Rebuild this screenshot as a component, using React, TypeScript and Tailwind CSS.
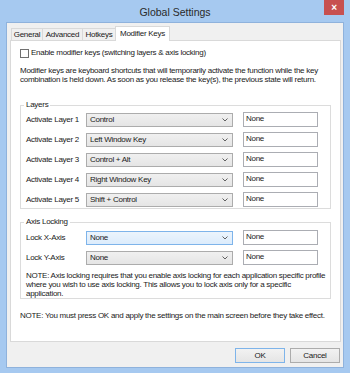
import React from 'react';

const FONT = { fontFamily: '"Liberation Sans", Arial, sans-serif' };

const LAYERS = [
  { label: 'Activate Layer 1', value: 'Control' },
  { label: 'Activate Layer 2', value: 'Left Window Key' },
  { label: 'Activate Layer 3', value: 'Control + Alt' },
  { label: 'Activate Layer 4', value: 'Right Window Key' },
  { label: 'Activate Layer 5', value: 'Shift + Control' },
];

const TABS = [
  { label: 'General', w: 'w-[32px]' },
  { label: 'Advanced', w: 'w-[41px]' },
  { label: 'Hotkeys', w: 'w-[34px]' },
];

function Chevron() {
  return (
    <svg width="6" height="4" viewBox="0 0 6 4" className="mr-[4px]">
      <path d="M0.5 0.5 L3 3 L5.5 0.5" fill="none" stroke="#606060" strokeWidth="1" />
    </svg>
  );
}

function Combo({ value, focused }: { value: string; focused?: boolean }) {
  return (
    <div
      className={`w-[147px] h-[14px] flex items-center justify-between border pl-[3px] ${
        focused
          ? 'border-[#7eb4ea] bg-gradient-to-b from-[#ecf4fc] to-[#dcecfc]'
          : 'border-[#acacac] bg-gradient-to-b from-[#f0f0f0] to-[#e5e5e5]'
      }`}
    >
      <span className="leading-none">{value}</span>
      <Chevron />
    </div>
  );
}

function TextBox() {
  return (
    <div className="w-[75px] h-[15px] border border-[#abadb3] bg-white pl-[2px] pt-[2px] leading-none">
      None
    </div>
  );
}

function Row({ label, value, focused }: { label: string; value: string; focused?: boolean }) {
  return (
    <div className="flex items-center h-[15px]">
      <span className="w-[65px] pl-[5px] leading-none">{label}</span>
      <Combo value={value} focused={focused} />
      <div className="w-[10px]" />
      <TextBox />
    </div>
  );
}

export default function App() {
  return (
    <div
      className="w-[350px] h-[373px] bg-[#a6c9f0] flex flex-col text-[8px] tracking-[-0.27px] text-[#1a1a1a] whitespace-nowrap"
      style={FONT}
    >
      {/* title bar */}
      <div className="h-[22px] flex items-start relative">
        <div className="flex-1 text-center text-[10.5px] tracking-normal text-[#2a2a2a] pt-[5px]">Global Settings</div>
        <div className="absolute right-[6px] top-0 w-[20px] h-[15px] bg-[#c75050] flex items-center justify-center text-white text-[10px] font-bold leading-none">
          ×
        </div>
      </div>

      {/* client */}
      <div className="mx-[6px] h-[346px] bg-[#f0f0f0] border border-[#8fb2dc] flex flex-col">
        {/* tabs */}
        <div className="flex items-end h-[17px] pl-[4px] pt-[2px]">
          {TABS.map(t => (
            <div
              key={t.label}
              className={`${t.w} h-[12px] border border-b-0 border-[#d9d9d9] bg-[#f0f0f0] -mr-px flex items-center justify-center leading-none`}
            >
              {t.label}
            </div>
          ))}
          <div className="w-[55px] h-[15px] border border-b-0 border-[#d9d9d9] bg-white -mb-px relative z-10 flex items-center justify-center leading-none">
            Modifier Keys
          </div>
        </div>

        {/* panel */}
        <div className="ml-[3px] w-[331px] h-[302px] bg-white border border-[#d9d9d9] flex flex-col px-[9px]">
          <div className="flex items-center mt-[7px] h-[10px]">
            <div className="w-[9px] h-[9px] border border-[#707070] bg-white" />
            <span className="ml-[2px] leading-none">Enable modifier keys (switching layers &amp; axis locking)</span>
          </div>
          <p className="mt-[8px] leading-[9px]">
            Modifier keys are keyboard shortcuts that will temporarily activate the function while the key
            <br />
            combination is held down. As soon as you release the key(s), the previous state will return.
          </p>

          {/* Layers */}
          <fieldset className="mt-[17px] w-[311px] h-[108px] border border-[#dcdcdc] px-0 flex flex-col">
            <legend className="ml-[3px] px-[2px] leading-none">Layers</legend>
            <div className="flex flex-col gap-[5px] mt-[3px]">
              {LAYERS.map(l => (
                <Row key={l.label} label={l.label} value={l.value} />
              ))}
            </div>
          </fieldset>

          {/* Axis locking */}
          <fieldset className="mt-[9px] w-[311px] h-[81px] border border-[#dcdcdc] px-0 flex flex-col">
            <legend className="ml-[3px] px-[2px] leading-none">Axis Locking</legend>
            <div className="flex flex-col gap-[5px] mt-[4px]">
              <Row label="Lock X-Axis" value="None" focused />
              <Row label="Lock Y-Axis" value="None" />
            </div>
            <p className="mt-[6px] pl-[5px] leading-[9px]">
              NOTE: Axis locking requires that you enable axis locking for each application specific profile
              <br />
              where you wish to use axis locking. This allows you to lock axis only for a specific
              <br />
              application.
            </p>
          </fieldset>

          <p className="mt-[13px] leading-none">
            NOTE: You must press OK and apply the settings on the main screen before they take effect.
          </p>
        </div>

        {/* buttons */}
        <div className="flex justify-end gap-[5px] mt-[6px] pr-[3px]">
          <div className="w-[50px] h-[15px] border border-[#7eb4ea] bg-gradient-to-b from-[#f2f2f2] to-[#e5e5e5] flex items-center justify-center leading-none">
            OK
          </div>
          <div className="w-[50px] h-[15px] border border-[#acacac] bg-gradient-to-b from-[#f2f2f2] to-[#e5e5e5] flex items-center justify-center leading-none">
            Cancel
          </div>
        </div>
      </div>
    </div>
  );
}
